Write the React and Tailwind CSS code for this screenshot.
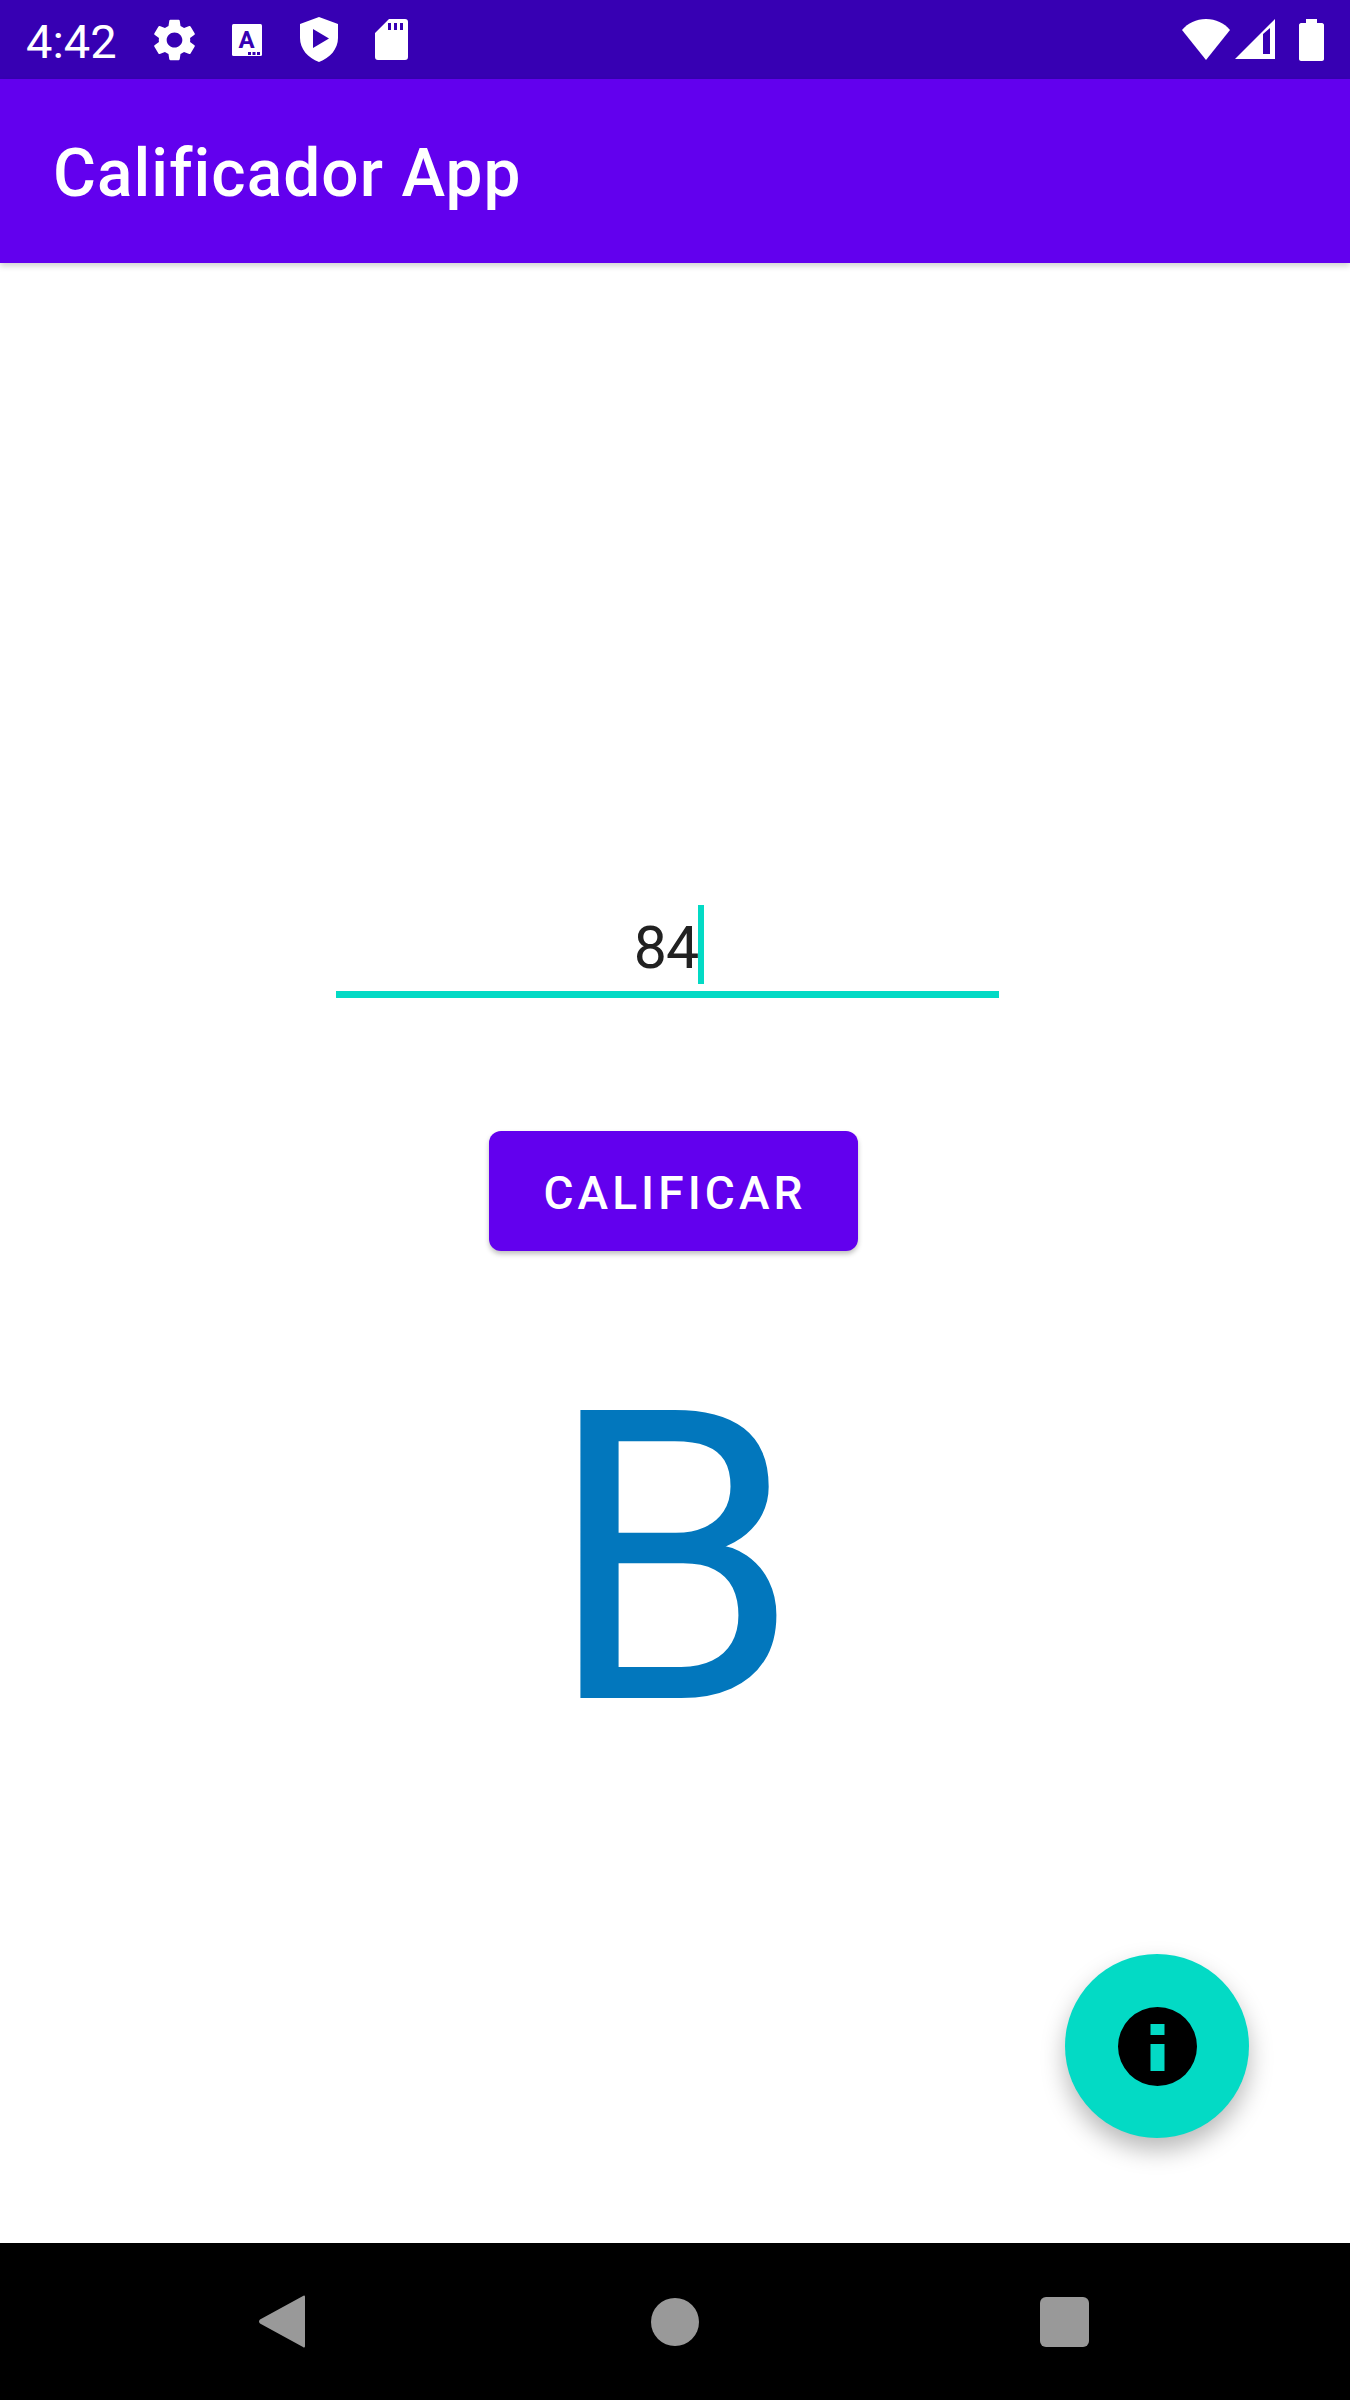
export default function App() {
  const roboto = { fontFamily: 'Roboto, "Liberation Sans", sans-serif' };
  return (
    <div className="relative flex h-[2400px] w-[1350px] flex-col overflow-hidden bg-white font-['Roboto',sans-serif]">
      {/* Status bar */}
      <div className="flex h-[79px] shrink-0 items-center bg-[#3700b3] text-white">
        <span className="mt-[3px] ml-[26px] w-[91px] text-[47px] leading-none">4:42</span>
        <svg className="ml-[37px] h-[42px] w-[41px]" viewBox="2.6 2 18.8 20" fill="white" preserveAspectRatio="none">
          <path d="M19.14 12.94c.04-.3.06-.61.06-.94 0-.32-.02-.64-.07-.94l2.03-1.58c.18-.14.23-.41.12-.61l-1.92-3.32c-.12-.22-.37-.29-.59-.22l-2.39.96c-.5-.38-1.03-.7-1.62-.94l-.36-2.54c-.04-.24-.24-.41-.48-.41h-3.84c-.24 0-.43.17-.47.41l-.36 2.54c-.59.24-1.13.57-1.62.94l-2.39-.96c-.22-.08-.47 0-.59.22L2.74 8.87c-.12.21-.08.47.12.61l2.03 1.58c-.05.3-.09.63-.09.94s.02.64.07.94l-2.03 1.58c-.18.14-.23.41-.12.61l1.92 3.32c.12.22.37.29.59.22l2.39-.96c.5.38 1.03.7 1.62.94l.36 2.54c.05.24.24.41.48.41h3.84c.24 0 .44-.17.47-.41l.36-2.54c.59-.24 1.13-.56 1.62-.94l2.39.96c.22.08.47 0 .59-.22l1.92-3.32c.12-.22.07-.47-.12-.61l-2.01-1.58zM12 15.6c-1.98 0-3.6-1.62-3.6-3.6s1.62-3.6 3.6-3.6 3.6 1.62 3.6 3.6-1.62 3.6-3.6 3.6z" />
        </svg>
        <svg className="ml-[37px] h-[32px] w-[30px]" viewBox="0 0 30 32">
          <rect width="30" height="32" rx="1.5" fill="white" />
          <text x="14.5" y="24" textAnchor="middle" fontSize="24" fontWeight="700" fontFamily="Roboto, sans-serif" fill="#3700b3">A</text>
          <rect x="16" y="28" width="3" height="3" fill="#3700b3" />
          <rect x="20.5" y="28" width="3" height="3" fill="#3700b3" />
          <rect x="25" y="28" width="3" height="3" fill="#3700b3" />
        </svg>
        <svg className="ml-[38px] h-[45px] w-[38px]" viewBox="0 0 38 45">
          <path fillRule="evenodd" fill="white" d="M19 0 L38 7 V21 C38 32 30 41 19 45 C8 41 0 32 0 21 V7 Z M13 12 V31 L29 21.5 Z" />
        </svg>
        <svg className="ml-[37px] h-[41px] w-[33px]" viewBox="0 0 33 41">
          <path fillRule="evenodd" fill="white" d="M14 0 H30 C32 0 33 1 33 3 V38 C33 40 32 41 30 41 H3 C1 41 0 40 0 38 V14 Z M13 4 V11 H16 V4 Z M19 4 V11 H22 V4 Z M25 4 V11 H28 V4 Z" />
        </svg>
        <svg className="ml-auto h-[41px] w-[48px]" viewBox="0 0 48 41">
          <path fill="white" d="M0 11 C6 4 14 0 24 0 C34 0 42 4 48 11 L24 41 Z" />
        </svg>
        <svg className="ml-[5px] h-[41px] w-[40px]" viewBox="0 0 40 41">
          <path fillRule="evenodd" fill="white" d="M40 0 V40 H0 Z M28 15 L35 9 V35 H28 Z" />
        </svg>
        <svg className="ml-[24px] mr-[26px] h-[42px] w-[25px]" viewBox="0 0 25 42">
          <path fill="white" d="M7 0 H18 V4 H23 C24 4 25 5 25 6 V40 C25 41 24 42 23 42 H2 C1 42 0 41 0 40 V6 C0 5 1 4 2 4 H7 Z" />
        </svg>
      </div>

      {/* App bar */}
      <div className="z-10 flex h-[184px] shrink-0 items-center bg-[#6200ee] pl-[53px] shadow-[0_3px_6px_rgba(0,0,0,0.18)]">
        <h1 className="mt-[5px] text-[65.8px] leading-none font-medium tracking-[1.05px] text-white">Calificador App</h1>
      </div>

      {/* Content */}
      <main className="flex flex-1 flex-col">
        <div className="mt-[642px] ml-[336px] flex h-[93px] w-[663px] flex-col border-b-[7px] border-[#03dac5]">
          <div className="flex h-[79px] justify-center">
            <span className="mt-[8px] ml-[3px] text-[59px] leading-[69px] tracking-[-1px] text-[#212121]" style={roboto}>84</span>
            <span className="h-[79px] w-[6px] bg-[#03dac5]" />
          </div>
        </div>

        <button className="mt-[133px] ml-[489px] flex h-[120px] w-[369px] items-center justify-center rounded-[12px] bg-[#6200ee] pt-[3px] pl-[3px] text-[46px] leading-none font-medium tracking-[4.1px] text-white shadow-[0_3px_5px_rgba(0,0,0,0.25)]">
          CALIFICAR
        </button>

        <div className="mt-[71px] ml-[547px] text-[405px] leading-[475px] text-[#0277bd]">B</div>
      </main>

      {/* FAB */}
      <button className="absolute top-[1954px] left-[1065px] flex h-[184px] w-[184px] items-center justify-center rounded-full bg-[#03dac5] shadow-[0_12px_24px_rgba(0,0,0,0.28)]">
        <svg className="h-[79px] w-[79px]" viewBox="0 0 79 79">
          <path fillRule="evenodd" fill="black" d="M39.5 0 A39.5 39.5 0 1 0 39.5 79 A39.5 39.5 0 1 0 39.5 0 Z M32.5 17 H46.5 V28 H32.5 Z M32.5 37 H46.5 V64 H32.5 Z" />
        </svg>
      </button>

      {/* Navigation bar */}
      <nav className="flex h-[157px] shrink-0 items-center bg-black">
        <svg className="mt-[-1px] ml-[259px] h-[53px] w-[46px]" viewBox="0 0 46 53">
          <path fill="#999" d="M45 0.5 C45.7 0.5 46 1 46 2 V51 C46 52.5 45 53 44 52 L1 28.5 C-0.3 27.5 -0.3 25.5 1 24.5 L44 1 Z" />
        </svg>
        <span className="ml-[346px] h-[48px] w-[48px] rounded-full bg-[#999]" />
        <span className="ml-[341px] h-[50px] w-[49px] rounded-[6px] bg-[#999]" />
      </nav>
    </div>
  );
}
